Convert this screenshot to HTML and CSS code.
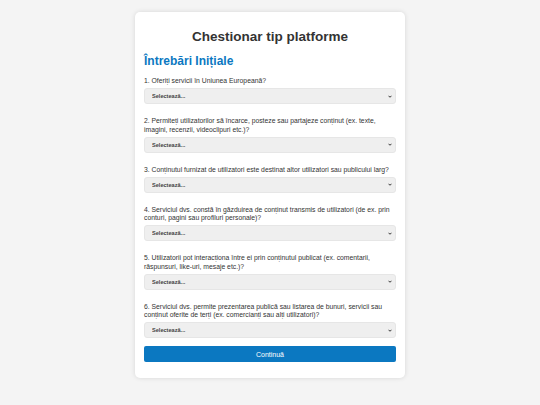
FILE: index.html
```html
<!DOCTYPE html>
<html lang="ro">
<head>
  <meta charset="UTF-8" />
  <meta name="viewport" content="width=device-width, initial-scale=1.0"/>
  <title>Chestionar tip platforme</title>
  <link rel="stylesheet" href="styles.css">
</head>
<body>
  <div class="container">
    <h1>Chestionar tip platforme</h1>
    <h2>Întrebări Inițiale</h2>

    <div class="question">
      <label for="q1">1. Oferiți servicii în Uniunea Europeană?</label>
      <div class="select-wrap">
        <select id="q1">
          <option>Selectează...</option>
          <option>Da</option>
          <option>Nu</option>
        </select>
        <svg class="chevron" viewBox="0 0 8 5"><path d="M1 1l3 3 3-3" /></svg>
      </div>
    </div>

    <div class="question">
      <label for="q2">2. Permiteți utilizatorilor să încarce, posteze sau partajeze conținut (ex. texte, imagini, recenzii, videoclipuri etc.)?</label>
      <div class="select-wrap">
        <select id="q2">
          <option>Selectează...</option>
          <option>Da</option>
          <option>Nu</option>
        </select>
        <svg class="chevron" viewBox="0 0 8 5"><path d="M1 1l3 3 3-3" /></svg>
      </div>
    </div>

    <div class="question">
      <label for="q3">3. Conținutul furnizat de utilizatori este destinat altor utilizatori sau publicului larg?</label>
      <div class="select-wrap">
        <select id="q3">
          <option>Selectează...</option>
          <option>Da</option>
          <option>Nu</option>
        </select>
        <svg class="chevron" viewBox="0 0 8 5"><path d="M1 1l3 3 3-3" /></svg>
      </div>
    </div>

    <div class="question">
      <label for="q4">4. Serviciul dvs. constă în găzduirea de conținut transmis de utilizatori (de ex. prin conturi, pagini sau profiluri personale)?</label>
      <div class="select-wrap">
        <select id="q4">
          <option>Selectează...</option>
          <option>Da</option>
          <option>Nu</option>
        </select>
        <svg class="chevron" viewBox="0 0 8 5"><path d="M1 1l3 3 3-3" /></svg>
      </div>
    </div>

    <div class="question">
      <label for="q5">5. Utilizatorii pot interacționa între ei prin conținutul publicat (ex. comentarii, răspunsuri, like-uri, mesaje etc.)?</label>
      <div class="select-wrap">
        <select id="q5">
          <option>Selectează...</option>
          <option>Da</option>
          <option>Nu</option>
        </select>
        <svg class="chevron" viewBox="0 0 8 5"><path d="M1 1l3 3 3-3" /></svg>
      </div>
    </div>

    <div class="question">
      <label for="q6">6. Serviciul dvs. permite prezentarea publică sau listarea de bunuri, servicii sau conținut oferite de terți (ex. comercianți sau alți utilizatori)?</label>
      <div class="select-wrap">
        <select id="q6">
          <option>Selectează...</option>
          <option>Da</option>
          <option>Nu</option>
        </select>
        <svg class="chevron" viewBox="0 0 8 5"><path d="M1 1l3 3 3-3" /></svg>
      </div>
    </div>

    <button class="next-btn">Continuă</button>
  </div>
</body>
</html>
```

FILE: styles.css
```css
body {
  margin: 0;
  font-family: "Liberation Sans", Arial, sans-serif;
  background-color: #f4f4f4;
  color: #333;
  padding: 12px 0 26px;
}

.container {
  background-color: #fff;
  width: 252px;
  margin: 0 auto;
  padding: 16px 9px 16px;
  border-radius: 5px;
  box-shadow: 0 0 5px rgba(0, 0, 0, 0.12);
}

h1 {
  text-align: center;
  font-size: 13.5px;
  line-height: 17px;
  margin: 0 0 9px;
  color: #333;
}

h2 {
  font-size: 12px;
  line-height: 14px;
  color: #0b78c1;
  margin: 0 0 9px;
}

.question {
  margin-bottom: 13px;
}

.question label {
  display: block;
  font-size: 6.8px;
  line-height: 8.5px;
  margin-bottom: 2.5px;
}

.select-wrap {
  position: relative;
}

.select-wrap select {
  display: block;
  width: 100%;
  height: 16px;
  font-size: 5.6px;
  font-weight: bold;
  font-family: "Liberation Sans", Arial, sans-serif;
  color: #444;
  background-color: #efefef;
  border: 1px solid #e6e6e6;
  border-radius: 3px;
  padding: 0 7px;
  appearance: none;
  -webkit-appearance: none;
}

.chevron {
  position: absolute;
  right: 4px;
  top: 6.5px;
  width: 4px;
  height: 3px;
  fill: none;
  stroke: #222;
  stroke-width: 1.8;
  pointer-events: none;
}

.next-btn {
  display: block;
  width: 100%;
  height: 16px;
  margin-top: -4.75px;
  background-color: #0b78c1;
  color: #fff;
  border: none;
  border-radius: 2px;
  font-size: 7px;
  font-family: "Liberation Sans", Arial, sans-serif;
  cursor: pointer;
}
```
